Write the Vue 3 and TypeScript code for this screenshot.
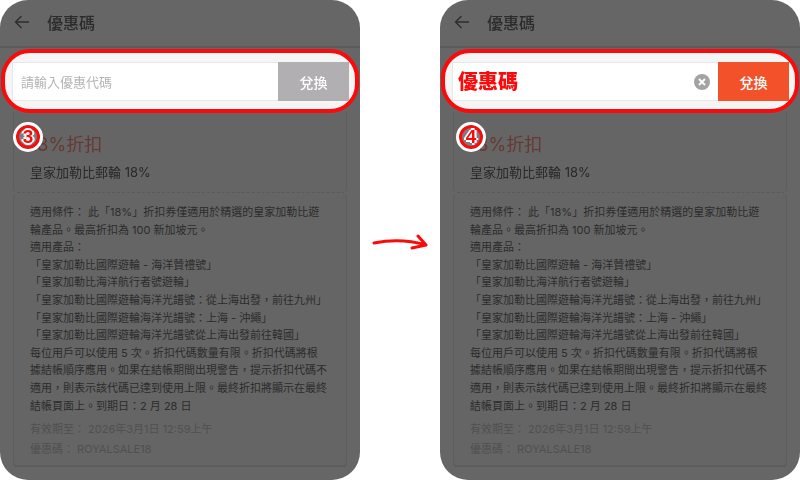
<script setup lang="ts">
interface Phone {
  badge: string
  active: boolean
}

const phones: Phone[] = [
  { badge: '3', active: false },
  { badge: '4', active: true },
]

const lines: string[] = [
  '適用條件： 此「18%」折扣券僅適用於精選的皇家加勒比遊',
  '輪產品。最高折扣為 100 新加坡元。',
  '適用產品：',
  '「皇家加勒比國際遊輪 - 海洋贊禮號」',
  '「皇家加勒比海洋航行者號遊輪」',
  '「皇家加勒比國際遊輪海洋光譜號：從上海出發，前往九州」',
  '「皇家加勒比國際遊輪海洋光譜號：上海 - 沖繩」',
  '「皇家加勒比國際遊輪海洋光譜號從上海出發前往韓國」',
  '每位用戶可以使用 5 次。折扣代碼數量有限。折扣代碼將根',
  '據結帳順序應用。如果在結帳期間出現警告，提示折扣代碼不',
  '適用，則表示該代碼已達到使用上限。最終折扣將顯示在最終',
  '結帳頁面上。到期日：2 月 28 日',
]
</script>

<template>
  <div class="stage">
    <template v-for="(phone, i) in phones" :key="phone.badge">
      <section class="phone">
        <header class="topbar">
          <svg class="back" viewBox="0 0 16 14" width="16" height="14">
            <path d="M15 7H1.5M7.5 1L1.5 7l6 6" fill="none" stroke="#2e2e2e" stroke-width="1.4" />
          </svg>
          <h1 class="title">優惠碼</h1>
        </header>
        <div class="ring">
          <div class="entry">
            <div class="field">
              <span v-if="phone.active" class="typed">優惠碼</span>
              <span v-else class="placeholder">請輸入優惠代碼</span>
              <svg v-if="phone.active" class="clear" viewBox="0 0 16 16" width="16" height="16">
                <circle cx="8" cy="8" r="8" fill="#a3a3a3" />
                <path d="M5 5l6 6M11 5l-6 6" stroke="#fff" stroke-width="1.8" />
              </svg>
            </div>
            <button class="redeem" :class="{ on: phone.active }">兌換</button>
          </div>
        </div>
        <div class="content">
          <div class="card summary">
            <span class="badge" :class="{ shifted: phone.active }">{{ phone.badge }}</span>
            <div class="discount">18%折扣</div>
            <div class="name">皇家加勒比郵輪 18%</div>
          </div>
          <div class="card details">
            <p v-for="line in lines" :key="line" class="line">{{ line }}</p>
            <p class="meta first">有效期至： 2026年3月1日 12:59上午</p>
            <p class="meta">優惠碼： ROYALSALE18</p>
          </div>
        </div>
      </section>
      <div v-if="i === 0" class="gutter">
        <svg viewBox="0 0 60 24" width="60" height="24">
          <path d="M3 14C18 11 38 11 55 16M47 7l8 9-14 3" fill="none" stroke="#fa0a0a" stroke-width="3" stroke-linecap="round" stroke-linejoin="round" />
        </svg>
      </div>
    </template>
  </div>
</template>

<style>
html,
body {
  margin: 0;
  background: #fff;
}
</style>

<style scoped>
.stage {
  display: flex;
  width: 800px;
  height: 480px;
  overflow: hidden;
  font-family: Inter, "Noto Sans CJK TC", sans-serif;
}
.phone {
  width: 360px;
  height: 480px;
  flex: none;
  display: flex;
  flex-direction: column;
  background: #666;
  border-radius: 28px;
  overflow: hidden;
  filter: blur(0.4px);
}
.gutter {
  flex: 1;
  display: flex;
  justify-content: center;
  padding-top: 229px;
}
.gutter svg {
  margin-left: 1px;
  filter: blur(0.4px);
}
.topbar {
  height: 48px;
  flex: none;
  box-sizing: border-box;
  display: flex;
  align-items: center;
  gap: 17px;
  padding: 0 0 3px 14px;
  border-bottom: 2px solid #5b5b5b;
}
.back {
  flex: none;
}
.title {
  margin: 0;
  font-size: 16px;
  font-weight: 500;
  color: #2b2b2b;
}
.ring {
  height: 64px;
  flex: none;
  box-sizing: border-box;
  margin: 1px 1px 0;
  border: 4px solid #fa0a0a;
  border-radius: 29px;
  background: #f5f5f5;
  display: flex;
  align-items: center;
  padding: 0 6px 0 7px;
}
.entry {
  flex: 1;
  display: flex;
  height: 39px;
  margin-top: 1px;
}
.field {
  flex: 1;
  display: flex;
  align-items: center;
  justify-content: space-between;
  box-sizing: border-box;
  padding: 0 6px 0 8px;
  background: #fff;
  border: 1px solid #e8e8e8;
  border-right: 0;
}
.placeholder {
  font-size: 13px;
  color: #b4b4b4;
}
.typed {
  font-size: 20px;
  font-weight: 900;
  color: #fa0a0a;
  margin: -3px 0 0 -3px;
}
.clear {
  margin-right: 2px;
}
.redeem {
  width: 71px;
  padding: 0;
  border: 0;
  background: #b2afb2;
  color: #fff;
  font: 500 14px Inter, "Noto Sans CJK TC", sans-serif;
}
.redeem.on {
  background: #f3512a;
}
.content {
  padding: 0 13px;
}
.card {
  position: relative;
  box-sizing: border-box;
  border: 1px solid #5d5d5d;
  padding: 0 16px;
  background: #656565;
}
.summary {
  height: 80px;
  border-top: 0;
  border-bottom: 1px dashed #5a5a5a;
  border-radius: 0 0 4px 4px;
  padding-top: 20px;
}
.summary::before,
.summary::after {
  content: "";
  position: absolute;
  bottom: -4px;
  width: 6px;
  height: 6px;
  border-radius: 50%;
  background: #666;
}
.summary::before {
  left: -4px;
}
.summary::after {
  right: -4px;
}
.badge {
  position: absolute;
  left: -1px;
  top: 9px;
  box-sizing: border-box;
  width: 30px;
  height: 30px;
  border-radius: 50%;
  border: 3px solid #fff;
  background: #7d7d7d;
  box-shadow: inset 0 0 0 3px #fa0a0a;
  color: #fa0a0a;
  font: 700 19px/24px "Liberation Sans", sans-serif;
  text-align: center;
  text-shadow: 2px 0 #fff, -2px 0 #fff, 0 2px #fff, 0 -2px #fff;
  z-index: 1;
}
.badge.shifted {
  left: 2px;
}
.discount {
  font-size: 18px;
  line-height: 24px;
  color: #663a32;
}
.name {
  margin-top: 6px;
  font-size: 13px;
  line-height: 18px;
  color: #282828;
}
.details {
  height: 273px;
  margin-top: 1px;
  padding-top: 10px;
  border-top: 0;
  border-bottom-width: 2px;
  border-radius: 4px;
}
p {
  margin: 0;
}
.line {
  font-size: 11px;
  line-height: 17.6px;
  color: #2c2c2c;
  white-space: nowrap;
}
.meta {
  font-size: 11px;
  line-height: 20px;
  color: #505050;
  white-space: nowrap;
}
.meta.first {
  margin-top: 4px;
}
</style>
